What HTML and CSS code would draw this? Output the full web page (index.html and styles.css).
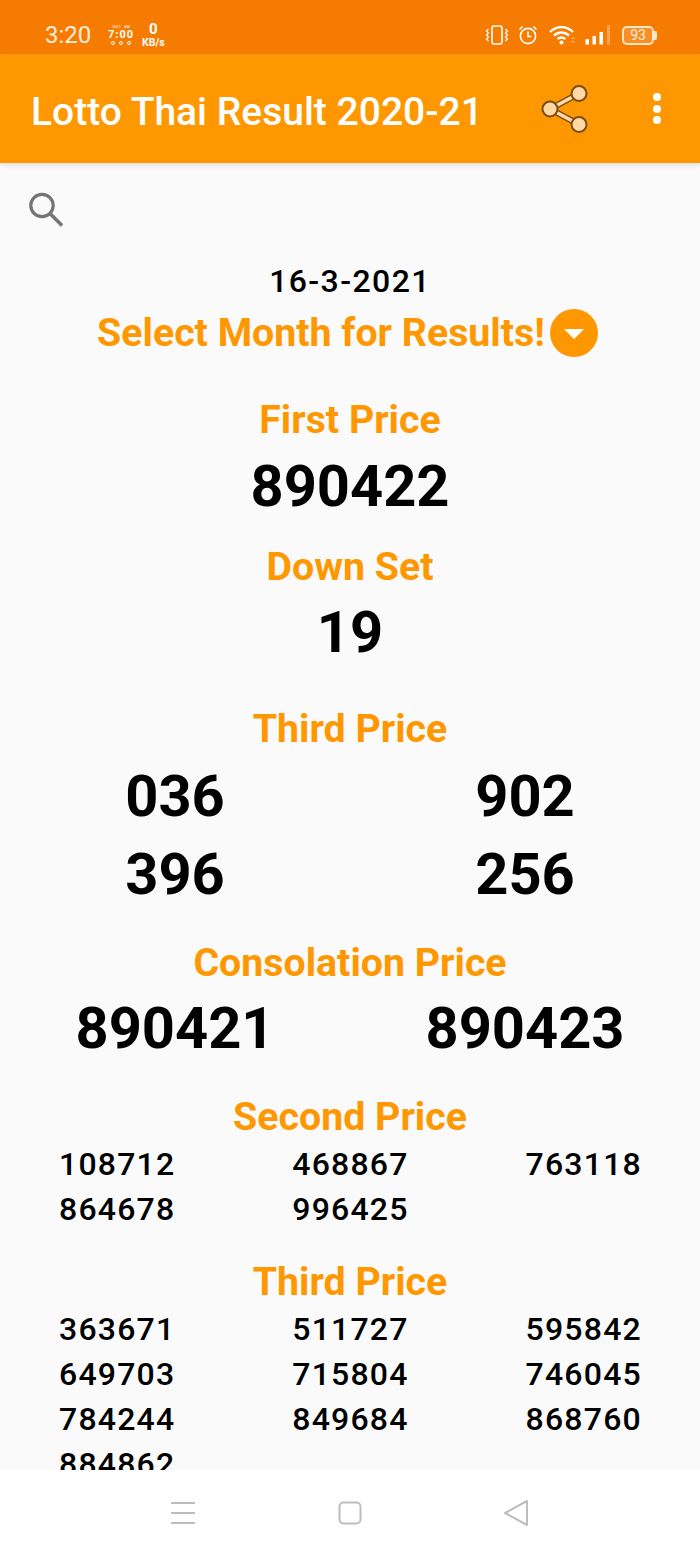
FILE: index.html
```html
<!DOCTYPE html>
<html lang="en">
<head>
    <meta charset="UTF-8">
    <meta name="viewport" content="width=device-width, initial-scale=1.0">
    <title>Lotto Thai Result 2020-21</title>
    <link rel="stylesheet" href="styles.css">
</head>
<body>
    <div class="status-bar">
        <div class="status-left">
            <span class="clock">3:20</span>
            <span class="mini-widget">
                <span class="mini-top">2021 &nbsp; AM</span>
                <span class="mini-time">7:00</span>
                <span class="mini-icons">
                    <i></i><i></i><i></i>
                </span>
            </span>
            <span class="speed"><b>0</b><small>KB/s</small></span>
        </div>
        <div class="status-right">
            <svg class="st-vibrate" width="24" height="20" viewBox="0 0 24 20" fill="none" stroke="#fff" stroke-width="1.6">
                <rect x="7" y="1" width="10" height="18" rx="2"/>
                <path d="M3.500 4 L1.500 6 L3.500 8 L1.500 10 L3.500 12 L1.500 14 L3.500 16 M20.500 4 L22.500 6 L20.500 8 L22.500 10 L20.500 12 L22.500 14 L20.500 16" stroke-width="1.200"/>
            </svg>
            <svg class="st-alarm" width="20" height="20" viewBox="0 0 20 20" fill="none" stroke="#fff" stroke-width="1.600">
                <circle cx="10" cy="11" r="7.600"/>
                <path d="M10 6.500 V11.500 H13.500"/>
                <path d="M1.500 4.500 L4.500 1.500 M18.500 4.500 L15.500 1.500"/>
            </svg>
            <svg class="st-wifi" width="27" height="20" viewBox="0 0 27 20" fill="none" stroke="#fff" stroke-width="2.400">
                <path d="M1 7 C7.500 0.500 17.500 0.500 24 7"/>
                <path d="M5 10.500 C9.500 6.500 15.500 6.500 20 10.500"/>
                <path d="M8.500 14 C11 12 14 12 16.500 14"/>
                <circle cx="12.500" cy="17.500" r="2" fill="#fff" stroke="none"/>
                <path d="M24 12 L26 14 H22 Z M22 16 H26 L24 18 Z" fill="#ffb877" stroke="none"/>
            </svg>
            <svg class="st-signal" width="26" height="20" viewBox="0 0 26 20" fill="#fff">
                <rect x="0.500" y="14" width="3.500" height="5.500"/>
                <rect x="7.500" y="11" width="3.500" height="8.500"/>
                <rect x="14.500" y="7" width="3.500" height="12.500"/>
                <rect x="22" y="0" width="3" height="19.500" opacity="0.3"/>
            </svg>
            <span class="battery">93</span>
        </div>
    </div>

    <header class="app-bar">
        <h1 class="app-title">Lotto Thai Result 2020-21</h1>
        <svg class="share-icon" width="48" height="50" viewBox="0 0 48 50">
            <path d="M9 25 L38 9.500 M9 25 L38 40.500" stroke="#7a4d10" stroke-width="6.500" fill="none"/>
            <path d="M9 25 L38 9.500 M9 25 L38 40.500" stroke="#ffd8a3" stroke-width="3.600" fill="none"/>
            <circle cx="9" cy="25" r="7.500" fill="#ffd8a3" stroke="#7a4d10" stroke-width="2"/>
            <circle cx="38" cy="9.500" r="7.500" fill="#ffd8a3" stroke="#7a4d10" stroke-width="2"/>
            <circle cx="38" cy="40.500" r="7.500" fill="#ffd8a3" stroke="#7a4d10" stroke-width="2"/>
        </svg>
        <div class="more-dots"><i></i><i></i><i></i></div>
    </header>

    <main class="results">
        <svg class="search-icon" width="38" height="38" viewBox="0 0 38 38" fill="none" stroke="#757575">
            <circle cx="14" cy="13.500" r="11.200" stroke-width="3.200"/>
            <path d="M22.500 22 L34 33.500" stroke-width="3.600"/>
        </svg>

        <div class="draw-date">16-3-2021</div>
        <div class="month-select">
            <span>Select Month for Results!</span>
            <span class="drop-btn"></span>
        </div>

        <h2 class="head head-first">First Price</h2>
        <div class="num-big">890422</div>

        <h2 class="head head-down">Down Set</h2>
        <div class="num-big">19</div>

        <h2 class="head head-third">Third Price</h2>
        <div class="two-col">
            <div class="num-big">036</div>
            <div class="num-big">902</div>
            <div class="num-big">396</div>
            <div class="num-big">256</div>
        </div>

        <h2 class="head head-cons">Consolation Price</h2>
        <div class="two-col">
            <div class="num-big">890421</div>
            <div class="num-big">890423</div>
        </div>

        <h2 class="head head-second">Second Price</h2>
        <div class="three-col">
            <div>108712</div><div>468867</div><div>763118</div>
            <div>864678</div><div>996425</div>
        </div>

        <h2 class="head head-last">Third Price</h2>
        <div class="three-col">
            <div>363671</div><div>511727</div><div>595842</div>
            <div>649703</div><div>715804</div><div>746045</div>
            <div>784244</div><div>849684</div><div>868760</div>
            <div>884862</div>
        </div>
    </main>

    <nav class="nav-bar">
        <svg width="26" height="24" viewBox="0 0 26 24" stroke="#bdbdbd" stroke-width="2" fill="none">
            <path d="M1 2 H25 M1 12 H25 M1 22 H25"/>
        </svg>
        <svg width="24" height="24" viewBox="0 0 24 24" stroke="#bdbdbd" stroke-width="2" fill="none">
            <rect x="1.500" y="1.500" width="21" height="21" rx="4"/>
        </svg>
        <svg width="26" height="28" viewBox="0 0 26 28" stroke="#bdbdbd" stroke-width="2" fill="none" stroke-linejoin="round">
            <path d="M24 2 V26 L2 14 Z"/>
        </svg>
    </nav>
</body>
</html>
```

FILE: styles.css
```css
* { box-sizing: border-box; }

body {
    margin: 0;
    width: 700px;
    height: 1556px;
    display: flex;
    flex-direction: column;
    overflow: hidden;
    font-family: Roboto, "Noto Sans", sans-serif;
    background: #fff;
    color: #000;
}

/* top system bar */
.status-bar {
    height: 54px;
    flex: none;
    background: #f57c00;
    color: #fff;
    display: flex;
    justify-content: space-between;
    align-items: center;
    padding: 16px 44px 0 45px;
}
.status-left, .status-right {
    display: flex;
    align-items: center;
}
.clock {
    font-size: 24px;
    width: 64px;
    color: #ffeedd;
}
.mini-widget {
    width: 24px;
    display: flex;
    flex-direction: column;
    align-items: center;
    line-height: 1;
    margin-right: 9px;
}
.mini-top { font-size: 4px; white-space: nowrap; }
.mini-time { font-size: 11px; font-weight: 700; letter-spacing: 1px; line-height: 11px; }
.mini-icons { display: flex; gap: 4px; margin-top: 1px; }
.mini-icons i { width: 4px; height: 4px; border: 1px solid #fff; border-radius: 50%; }
.speed {
    display: flex;
    flex-direction: column;
    align-items: center;
    line-height: 1;
}
.speed b { font-size: 15px; font-weight: 700; line-height: 15px; }
.speed small { font-size: 10.500px; font-weight: 700; line-height: 11px; }
.st-vibrate { margin-right: 9px; }
.st-alarm { margin-right: 11px; }
.st-wifi { margin-right: 9px; }
.st-signal { margin-right: 11px; }
.battery {
    width: 32px;
    height: 19px;
    margin-right: 2px;
    border: 2px solid #ffe6c8;
    border-radius: 5px;
    font-size: 14px;
    line-height: 15px;
    text-align: center;
    color: #ffeedd;
    background: rgba(255, 255, 255, 0.15);
    position: relative;
}
.battery::after {
    content: "";
    position: absolute;
    right: -5px;
    top: 3px;
    width: 3px;
    height: 9px;
    border-radius: 0 2px 2px 0;
    background: #ffe6c8;
}

/* app bar */
.app-bar {
    height: 109px;
    flex: none;
    background: #ff9800;
    display: flex;
    align-items: center;
    padding-left: 31px;
    position: relative;
    z-index: 1;
    box-shadow: 0 2px 5px rgba(0, 0, 0, 0.12);
}
.app-title {
    margin: 0;
    padding-top: 7px;
    font-size: 39px;
    font-weight: 500;
    color: #fff;
    width: 510px;
    white-space: nowrap;
}
.share-icon { flex: none; margin-right: 64px; }
.more-dots {
    display: flex;
    flex-direction: column;
    gap: 3.500px;
}
.more-dots i {
    width: 8px;
    height: 8px;
    background: #fff;
    border-radius: 50%;
}

/* results list */
.results {
    flex: 1;
    min-height: 0;
    overflow: hidden;
    background: #fafafa;
}
.search-icon {
    display: block;
    margin: 29px 0 0 28px;
}
.draw-date {
    margin-top: 33px;
    text-align: center;
    font-size: 32px;
    line-height: 36px;
    font-weight: 500;
    letter-spacing: 1.400px;
}
.month-select {
    display: flex;
    justify-content: center;
    align-items: center;
    gap: 5px;
    margin-top: 10px;
    height: 48px;
    color: #ff9800;
    font-size: 39.300px;
    font-weight: 700;
    padding-right: 5px;
}
.drop-btn {
    width: 48px;
    height: 48px;
    border-radius: 50%;
    background: #ff9800;
    position: relative;
}
.drop-btn::after {
    content: "";
    position: absolute;
    left: 14px;
    top: 20px;
    border-left: 10px solid transparent;
    border-right: 10px solid transparent;
    border-top: 10px solid #fff;
}
.head {
    margin: 0 0 -1px;
    text-align: center;
    color: #ff9800;
    font-size: 39.300px;
    line-height: 54px;
    font-weight: 700;
}
.head-first { margin-top: 36px; margin-bottom: 0; }
.head-down { margin-top: 15px; }
.head-third { margin-top: 31px; }
.head-cons { margin-top: 23px; }
.head-second { margin-top: 23px; }
.head-last { margin-top: 23px; }

.num-big {
    text-align: center;
    font-size: 57.800px;
    line-height: 78px;
    font-weight: 700;
}
.two-col {
    display: grid;
    grid-template-columns: 1fr 1fr;
}
.head-third + .two-col { margin-top: 2px; }
.three-col {
    display: grid;
    grid-template-columns: repeat(3, 233.300px);
    margin-top: -2px;
    padding-left: 59px;
    font-size: 32px;
    line-height: 45px;
    font-weight: 500;
    letter-spacing: 1.200px;
}

/* bottom system bar */
.nav-bar {
    height: 86px;
    flex: none;
    background: #fff;
    display: flex;
    align-items: center;
    padding: 0 171px 0 170px;
    justify-content: space-between;
}
```
